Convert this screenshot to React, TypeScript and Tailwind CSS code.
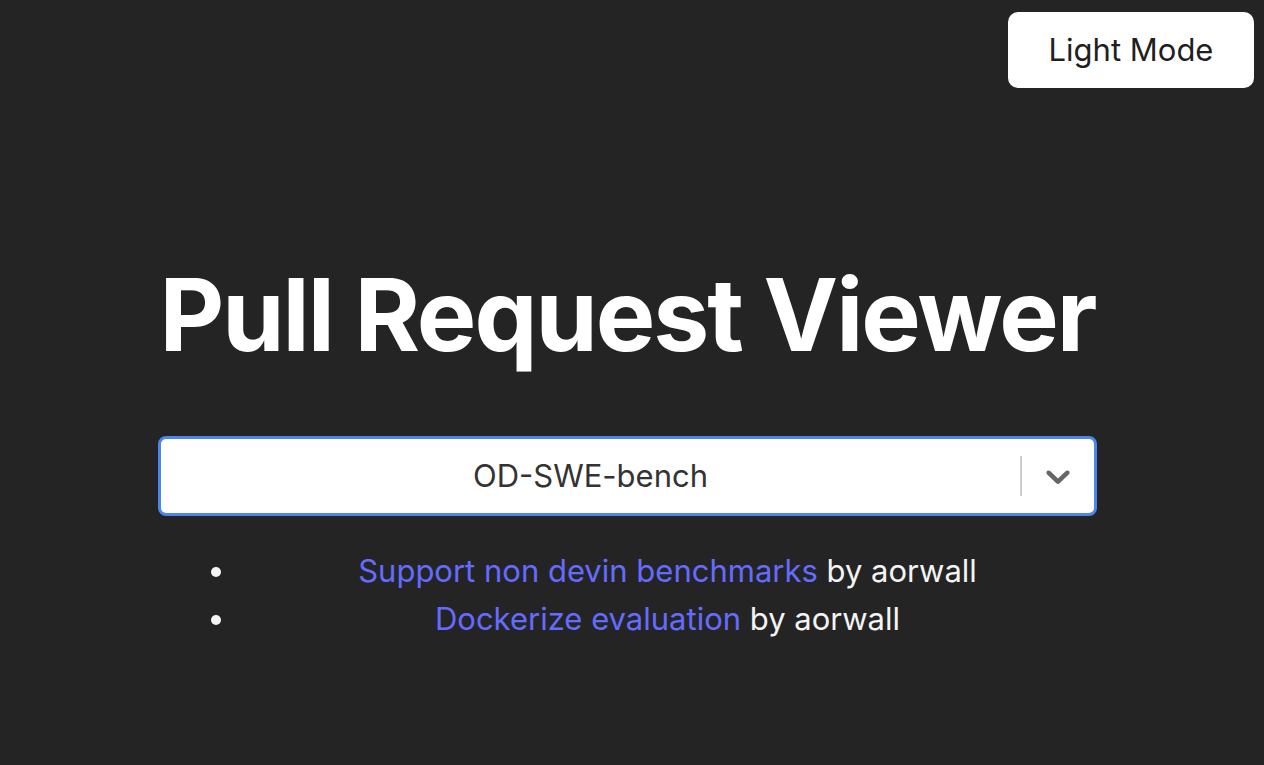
import React from 'react';

const pulls = [
  { title: 'Support non devin benchmarks', author: 'aorwall' },
  { title: 'Dockerize evaluation', author: 'aorwall' },
];

const App: React.FC = () => {
  return (
    <div className="relative min-h-screen bg-[#242424] font-['Inter','Noto_Sans',sans-serif] text-[#f4f4f4]">
      {/* Theme toggle */}
      <button className="absolute right-[10px] top-[12px] h-[76px] w-[246px] rounded-[10px] bg-white text-[31px] text-[#1f1f1f]">
        Light Mode
      </button>

      <div className="pr-[9px]">
        <div className="mx-auto flex w-[939px] flex-col pt-[260px]">
          <h1 className="whitespace-nowrap text-center text-[100px] font-bold leading-[110px] tracking-[-2px] text-white">
            Pull Request Viewer
          </h1>

          {/* Repo picker */}
          <div className="mt-[66px] flex h-[80px] items-center rounded-[8px] border-[3px] border-[#4a85f0] bg-white">
            <div className="flex-1 text-center text-[31px] text-[#333]">OD-SWE-bench</div>
            <div className="h-[40px] w-[2px] bg-[#ccc]" />
            <div className="flex w-[72px] items-center justify-center">
              <svg width="40" height="40" viewBox="0 0 20 20" fill="#666">
                <path d="M4.516 7.548c0.436-0.446 1.043-0.481 1.576 0l3.908 3.747 3.908-3.747c0.533-0.481 1.141-0.446 1.574 0 0.436 0.445 0.408 1.197 0 1.615-0.406 0.418-4.695 4.502-4.695 4.502-0.217 0.223-0.502 0.335-0.787 0.335s-0.57-0.112-0.789-0.335c0 0-4.287-4.084-4.695-4.502s-0.436-1.17 0-1.615z" />
              </svg>
            </div>
          </div>

          <ul className="mt-[31px] list-disc pl-[80px] text-center text-[31px] leading-[48px]">
            {pulls.map((pr) => (
              <li key={pr.title}>
                <a href="#" className="text-[#646cff]">{pr.title}</a> by {pr.author}
              </li>
            ))}
          </ul>
        </div>
      </div>
    </div>
  );
};

export default App;
